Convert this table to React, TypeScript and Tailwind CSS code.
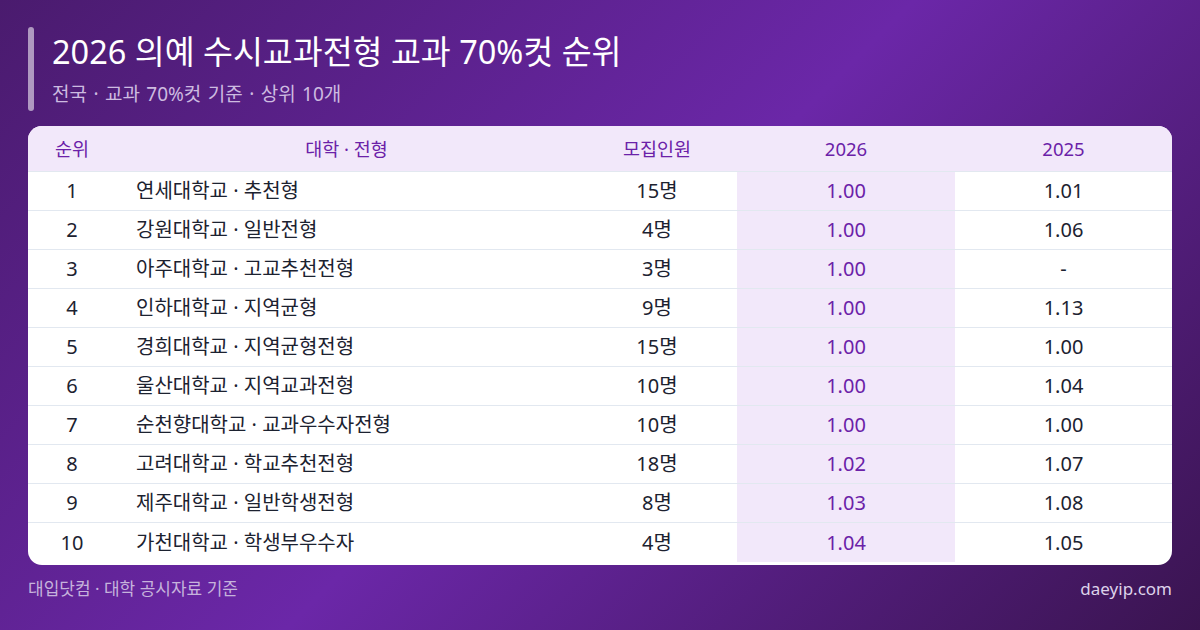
import React from "react";

const rows: [string, string, string, string, string][] = [
  ["1", "연세대학교 · 추천형", "15명", "1.00", "1.01"],
  ["2", "강원대학교 · 일반전형", "4명", "1.00", "1.06"],
  ["3", "아주대학교 · 고교추천전형", "3명", "1.00", "-"],
  ["4", "인하대학교 · 지역균형", "9명", "1.00", "1.13"],
  ["5", "경희대학교 · 지역균형전형", "15명", "1.00", "1.00"],
  ["6", "울산대학교 · 지역교과전형", "10명", "1.00", "1.04"],
  ["7", "순천향대학교 · 교과우수자전형", "10명", "1.00", "1.00"],
  ["8", "고려대학교 · 학교추천전형", "18명", "1.02", "1.07"],
  ["9", "제주대학교 · 일반학생전형", "8명", "1.03", "1.08"],
  ["10", "가천대학교 · 학생부우수자", "4명", "1.04", "1.05"],
];

export default function App() {
  return (
    <div
      className="w-[1200px] h-[630px] overflow-hidden flex flex-col px-[28px] pt-[27px] bg-[linear-gradient(135deg,#4a1b6e_0%,#6b27a8_50%,#3a1450_100%)]"
      style={{ fontFamily: '"Noto Sans", "Noto Sans CJK KR", sans-serif' }}
    >
      <div className="flex gap-[18px] h-[84px]">
        <div className="w-[6px] rounded-full bg-white/55" />
        <div className="flex flex-col">
          <div className="text-[32.5px] leading-[44px] text-white mt-[3px]">
            2026 의예 수시교과전형 교과 70%컷 순위
          </div>
          <div className="text-[19px] leading-[25px] text-[#cdbbe0] mt-[8px] [word-spacing:1.5px]">
            전국 · 교과 70%컷 기준 · 상위 10개
          </div>
        </div>
      </div>
      <div className="mt-[15px] bg-white rounded-[14px] overflow-hidden pb-[3px]">
        <div className="grid grid-cols-[88px_461px_160px_218px_217px] h-[46px] items-center bg-[#f2e8fa] text-[#6b21a8] text-[18.5px] border-b border-[#e2e8f0]">
          <div className="text-center">순위</div>
          <div className="text-center">대학 · 전형</div>
          <div className="text-center">모집인원</div>
          <div className="text-center">2026</div>
          <div className="text-center">2025</div>
        </div>
        {rows.map((r, i) => (
          <div
            key={i}
            className={`grid grid-cols-[88px_461px_160px_218px_217px] h-[39px] text-[20px] text-[#1c2230] ${i < rows.length - 1 ? "border-b border-[#e2e8f0]" : ""}`}
          >
            <div className="flex items-center justify-center">{r[0]}</div>
            <div className="flex items-center pl-[20px]">{r[1]}</div>
            <div className="flex items-center justify-center">{r[2]}</div>
            <div className="flex items-center justify-center bg-[#f2e8fa] text-[#6b21a8]">{r[3]}</div>
            <div className="flex items-center justify-center">{r[4]}</div>
          </div>
        ))}
      </div>
      <div className="flex justify-between mt-[12px] text-[17px] leading-[24px]">
        <div className="text-[#c6b3dc]">대입닷컴 · 대학 공시자료 기준</div>
        <div className="text-[#ddd2ea]">daeyip.com</div>
      </div>
    </div>
  );
}
